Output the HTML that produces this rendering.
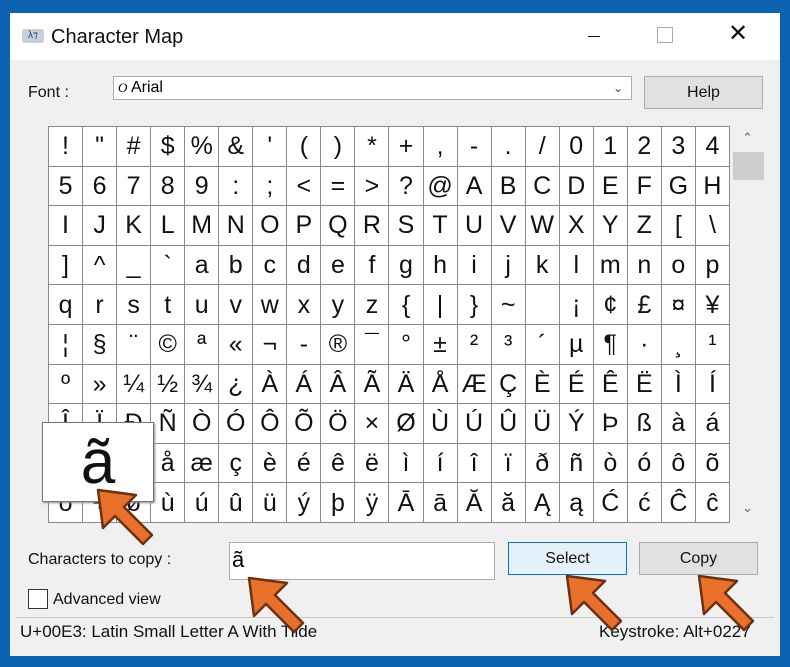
<!DOCTYPE html>
<html><head><meta charset="utf-8"><style>
*{margin:0;padding:0;box-sizing:border-box}
body{width:790px;height:667px;background:#0a62b0;font-family:"Liberation Sans",sans-serif;position:relative;overflow:hidden}
.win{position:absolute;left:10px;top:13px;width:770px;height:643px;background:#f0f0f0}
.title{position:absolute;left:0;top:0;width:770px;height:47px;background:#fff}
.abs{position:absolute}
.lbl{font-size:16px;color:#111}
table{position:absolute;left:48px;top:126px;border-collapse:collapse;background:#fff}
td{width:34.05px;height:39.6px;border:1px solid #8a8a8a;text-align:center;font-size:25px;color:#111;padding:0;line-height:38px}
.btn{position:absolute;font-size:16px;text-align:center;color:#111}
</style></head><body>
<div class="win">
<div class="title"></div>
</div>
<div class="abs" style="left:22px;top:29px;width:22px;height:14px;background:#c8d0dc;border-radius:3px;font-size:10px;color:#246;line-height:14px;text-align:center">λ⁊</div>
<div class="abs" style="left:51px;top:26px;font-size:20px;color:#111">Character Map</div>
<div class="abs" style="left:588px;top:36px;width:12px;height:1px;background:#111"></div>
<div class="abs" style="left:657px;top:27px;width:16px;height:16px;border:1px solid #aaa"></div>
<div class="abs" style="left:728px;top:22px;font-size:24px;color:#111;line-height:24px">✕</div>
<div class="abs lbl" style="left:28px;top:84px">Font :</div>
<div class="abs" style="left:113px;top:76px;width:519px;height:24px;background:#fff;border:1px solid #adadad;font-size:16px;line-height:22px;padding-left:4px"><i style="font-family:'Liberation Serif';font-size:13px">O</i> Arial<span style="position:absolute;right:8px;top:0;font-size:12px;color:#444">⌄</span></div>
<div class="btn" style="left:644px;top:76px;width:119px;height:33px;background:#e1e1e1;border:1px solid #adadad;line-height:31px">Help</div>
<table>
<tr><td>!</td><td>"</td><td>#</td><td>$</td><td>%</td><td>&amp;</td><td>'</td><td>(</td><td>)</td><td>*</td><td>+</td><td>,</td><td>-</td><td>.</td><td>/</td><td>0</td><td>1</td><td>2</td><td>3</td><td>4</td></tr>
<tr><td>5</td><td>6</td><td>7</td><td>8</td><td>9</td><td>:</td><td>;</td><td>&lt;</td><td>=</td><td>&gt;</td><td>?</td><td>@</td><td>A</td><td>B</td><td>C</td><td>D</td><td>E</td><td>F</td><td>G</td><td>H</td></tr>
<tr><td>I</td><td>J</td><td>K</td><td>L</td><td>M</td><td>N</td><td>O</td><td>P</td><td>Q</td><td>R</td><td>S</td><td>T</td><td>U</td><td>V</td><td>W</td><td>X</td><td>Y</td><td>Z</td><td>[</td><td>\</td></tr>
<tr><td>]</td><td>^</td><td>_</td><td>`</td><td>a</td><td>b</td><td>c</td><td>d</td><td>e</td><td>f</td><td>g</td><td>h</td><td>i</td><td>j</td><td>k</td><td>l</td><td>m</td><td>n</td><td>o</td><td>p</td></tr>
<tr><td>q</td><td>r</td><td>s</td><td>t</td><td>u</td><td>v</td><td>w</td><td>x</td><td>y</td><td>z</td><td>{</td><td>|</td><td>}</td><td>~</td><td></td><td>¡</td><td>¢</td><td>£</td><td>¤</td><td>¥</td></tr>
<tr><td>¦</td><td>§</td><td>¨</td><td>©</td><td>ª</td><td>«</td><td>¬</td><td>-</td><td>®</td><td>¯</td><td>°</td><td>±</td><td>²</td><td>³</td><td>´</td><td>µ</td><td>¶</td><td>·</td><td>¸</td><td>¹</td></tr>
<tr><td>º</td><td>»</td><td>¼</td><td>½</td><td>¾</td><td>¿</td><td>À</td><td>Á</td><td>Â</td><td>Ã</td><td>Ä</td><td>Å</td><td>Æ</td><td>Ç</td><td>È</td><td>É</td><td>Ê</td><td>Ë</td><td>Ì</td><td>Í</td></tr>
<tr><td>Î</td><td>Ï</td><td>Ð</td><td>Ñ</td><td>Ò</td><td>Ó</td><td>Ô</td><td>Õ</td><td>Ö</td><td>×</td><td>Ø</td><td>Ù</td><td>Ú</td><td>Û</td><td>Ü</td><td>Ý</td><td>Þ</td><td>ß</td><td>à</td><td>á</td></tr>
<tr><td>â</td><td>ã</td><td>ä</td><td>å</td><td>æ</td><td>ç</td><td>è</td><td>é</td><td>ê</td><td>ë</td><td>ì</td><td>í</td><td>î</td><td>ï</td><td>ð</td><td>ñ</td><td>ò</td><td>ó</td><td>ô</td><td>õ</td></tr>
<tr><td>ö</td><td>÷</td><td>ø</td><td>ù</td><td>ú</td><td>û</td><td>ü</td><td>ý</td><td>þ</td><td>ÿ</td><td>Ā</td><td>ā</td><td>Ă</td><td>ă</td><td>Ą</td><td>ą</td><td>Ć</td><td>ć</td><td>Ĉ</td><td>ĉ</td></tr>
</table>
<div class="abs" style="left:742px;top:130px;font-size:13px;color:#666">⌃</div>
<div class="abs" style="left:733px;top:152px;width:31px;height:28px;background:#cdcdcd"></div>
<div class="abs" style="left:742px;top:500px;font-size:13px;color:#666">⌄</div>
<div class="abs" style="left:42px;top:422px;width:112px;height:80px;background:#fff;border:1px solid #777;box-shadow:1px 1px 2px #888;text-align:center;font-size:62px;line-height:80px;color:#111">ã</div>
<div class="abs lbl" style="left:28px;top:551px">Characters to copy :</div>
<div class="abs" style="left:229px;top:542px;width:266px;height:38px;background:#fff;border:1px solid #adadad;font-size:22px;line-height:34px;padding-left:2px">ã</div>
<div class="btn" style="left:508px;top:542px;width:119px;height:33px;background:#e5f1fb;border:1px solid #0078d7;line-height:31px">Select</div>
<div class="btn" style="left:639px;top:542px;width:119px;height:33px;background:#e1e1e1;border:1px solid #adadad;line-height:31px">Copy</div>
<div class="abs" style="left:28px;top:589px;width:20px;height:20px;background:#fff;border:1px solid #333"></div>
<div class="abs lbl" style="left:53px;top:591px">Advanced view</div>
<div class="abs" style="left:16px;top:617px;width:758px;height:1px;background:#c8c8c8"></div>
<div class="abs" style="left:20px;top:622px;font-size:17px;color:#111">U+00E3: Latin Small Letter A With Tilde</div>
<div class="abs" style="left:599px;top:622px;font-size:17px;color:#111">Keystroke: Alt+0227</div>
<svg class="abs" style="left:0;top:0" width="790" height="667">
<defs><polygon id="ar" points="0,0 38,5 26,17 54,45 45,54 17,26 5,38" fill="#e8702a" stroke="#6a3212" stroke-width="2.5" stroke-linejoin="round"/></defs>
<use href="#ar" x="98" y="490"/>
<use href="#ar" x="249" y="578"/>
<use href="#ar" x="567" y="576"/>
<use href="#ar" x="699" y="576"/>
</svg>
</body></html>
